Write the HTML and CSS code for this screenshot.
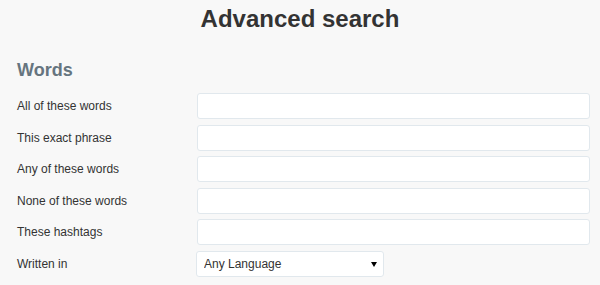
FILE: index.html
```html
<!DOCTYPE html>
<html>
<head>
<meta charset="utf-8">
<link rel="stylesheet" href="styles.css">
</head>
<body>
<h1 class="title">Advanced search</h1>
<h2 class="section">Words</h2>
<div class="form">
  <label class="lbl">All of these words</label><input class="field" type="text">
  <label class="lbl">This exact phrase</label><input class="field" type="text">
  <label class="lbl">Any of these words</label><input class="field" type="text">
  <label class="lbl">None of these words</label><input class="field" type="text">
  <label class="lbl">These hashtags</label><input class="field" type="text">
  <label class="lbl">Written in</label>
  <div class="select-wrap"><select class="select"><option>Any Language</option></select></div>
</div>
</body>
</html>
```
FILE: styles.css
```css
html, body {
  margin: 0;
  padding: 0;
  background: #f8f8f8;
  font-family: "Liberation Sans", Arial, sans-serif;
  color: #333;
}
.title {
  margin: 0;
  padding-top: 5px;
  font-size: 24px;
  line-height: 28px;
  font-weight: bold;
  text-align: center;
  color: #333;
}
.section {
  margin: 26px 0 0 17px;
  font-size: 18px;
  line-height: 22px;
  font-weight: bold;
  color: #66757f;
}
.form {
  display: grid;
  grid-template-columns: 180px 1fr;
  row-gap: 5.5px;
  padding: 12px 10px 0 17px;
  align-items: center;
}
.lbl {
  font-size: 12px;
  color: #333;
}
.field {
  box-sizing: border-box;
  height: 26px;
  width: 100%;
  margin: 0;
  background: #fff;
  border: 1px solid #e1e8ed;
  border-radius: 3px;
  outline: none;
}
.select-wrap {
  position: relative;
  width: 188px;
  height: 26px;
  margin-left: -1px;
}
.select {
  appearance: none;
  -webkit-appearance: none;
  box-sizing: border-box;
  width: 188px;
  height: 26px;
  margin: 0;
  padding: 0 0 0 7px;
  background: #fff;
  border: 1px solid #e1e8ed;
  border-radius: 3px;
  font-family: "Liberation Sans", Arial, sans-serif;
  font-size: 12px;
  color: #333;
  outline: none;
}
.select-wrap::after {
  content: "";
  position: absolute;
  right: 7px;
  top: 11px;
  border-left: 3px solid transparent;
  border-right: 3px solid transparent;
  border-top: 5px solid #000;
  pointer-events: none;
}
```
